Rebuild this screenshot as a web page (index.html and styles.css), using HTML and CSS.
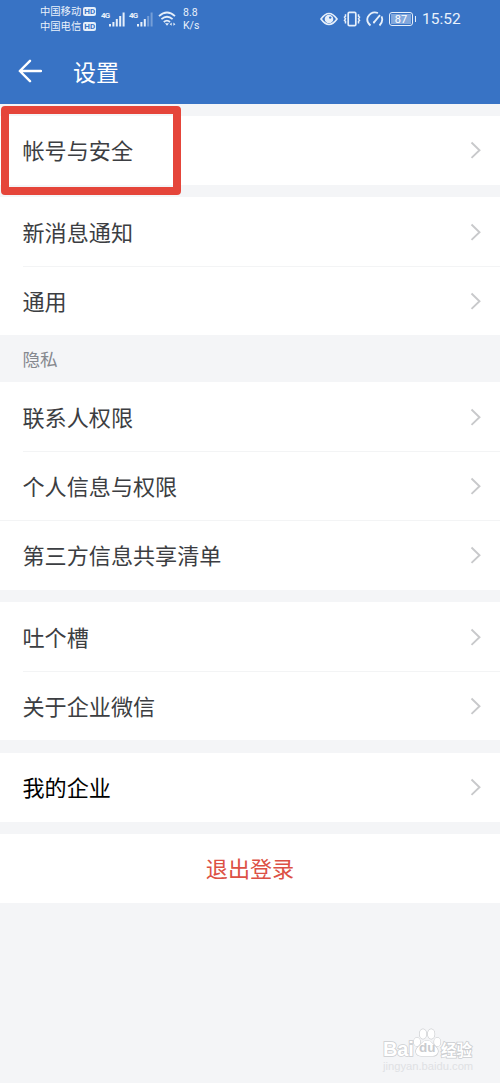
FILE: index.html
```html
<!DOCTYPE html>
<html lang="zh-CN">
<head>
<meta charset="utf-8">
<title>设置</title>
<link rel="stylesheet" href="styles.css">
</head>
<body>
<svg width="0" height="0" class="defs">
  <symbol id="chevron" viewBox="0 0 12 18"><path d="M1.500 1.500 9.500 9.200 1.500 16.900" fill="none" stroke="#c8c9cb" stroke-width="1.900"/></symbol>
</svg>
<header class="top">
  <div class="status">
    <div class="carriers">
      <div class="carrier">中国移动<span class="hd">HD</span></div>
      <div class="carrier">中国电信<span class="hd">HD</span></div>
    </div>
    <div class="signals">
      <div class="signal"><span class="gen">4G</span>
        <svg width="17" height="15" viewBox="0 0 17 15" fill="#e6effa"><rect x="0" y="12" width="2" height="2.5"/><rect x="3.4" y="10" width="2" height="4.5"/><rect x="6.8" y="7" width="2" height="7.5"/><rect x="10.2" y="4" width="2" height="10.5"/><rect x="13.6" y="0.5" width="2" height="14"/></svg>
      </div>
      <div class="signal"><span class="gen">4G</span>
        <svg width="17" height="15" viewBox="0 0 17 15" fill="#e6effa"><rect x="0" y="12" width="2" height="2.5"/><rect x="3.4" y="10" width="2" height="4.5"/><rect x="6.8" y="7" width="2" height="7.5"/><g opacity=".35"><rect x="10.2" y="4" width="2" height="10.5"/><rect x="13.6" y="0.5" width="2" height="14"/></g></svg>
      </div>
    </div>
    <svg class="wifi" width="18" height="16" viewBox="0 0 18 16" fill="none" stroke="#e6effa" stroke-width="1.8"><path d="M1 5.2Q9-2.2 17 5.2M3.4 8.2Q9 3.2 14.6 8.2M5.8 11Q9 8.2 12 11"/><path d="m7 12.2 2 2.6 2-2.6Z" fill="#e6effa" stroke="none"/><path d="m11.7 13.2 2-1.6v3.2Zm5.7 0-2-1.6v3.2Z" fill="#e6effa" stroke="none"/></svg>
    <div class="speed"><div>8.8</div><div>K/s</div></div>
    <div class="tray">
      <svg width="18" height="14" viewBox="0 0 18 14"><path d="M1 7Q9-4 17 7 9 18 1 7Z" fill="none" stroke="#e6effa" stroke-width="1.7"/><circle cx="9" cy="7" r="4.300" fill="#e6effa"/><circle cx="10.200" cy="5.600" r="1.2" fill="#3873c5"/></svg>
      <svg width="18" height="16" viewBox="0 0 18 16" fill="none" stroke="#e6effa"><rect x="5.2" y="1.3" width="7.6" height="13.4" rx="1.2" stroke-width="1.7"/><path d="M2.500 3.200v2l-1 1 1 1.600-1 1.600 1 1v2M15.500 3.200v2l1 1-1 1.600 1 1.600-1 1v2" stroke-width="1.5"/></svg>
      <svg width="18" height="16" viewBox="0 0 18 16" fill="none" stroke="#e6effa" stroke-width="1.8"><path d="M4.5 14.5Q-.3 10.5 2 5.7 5.5-.2 12 2M15.5 5.3q2.200 5-2 9.200M8 11.3l6-7.200"/><circle cx="8" cy="11.4" r="1.1" fill="#e6effa" stroke="none"/></svg>
      <div class="battery"><span class="level">87</span></div>
      <span class="clock">15:52</span>
    </div>
  </div>
  <div class="nav">
    <svg width="24" height="24" viewBox="0 0 24 24" fill="none" stroke="#fff" stroke-width="2.4" stroke-linecap="round" stroke-linejoin="round"><path d="M12 1.8 1.8 12 12 22.2M2 12h21"/></svg>
    <h1 class="title">设置</h1>
  </div>
</header>
<main class="list">
  <section class="group first">
    <div class="row"><span>帐号与安全</span><svg class="chev"><use href="#chevron"/></svg></div>
    <div class="highlight"></div>
  </section>
  <section class="group">
    <div class="row"><span>新消息通知</span><svg class="chev"><use href="#chevron"/></svg></div>
    <div class="row line"><span>通用</span><svg class="chev"><use href="#chevron"/></svg></div>
  </section>
  <h2 class="caption">隐私</h2>
  <section class="group joined">
    <div class="row"><span>联系人权限</span><svg class="chev"><use href="#chevron"/></svg></div>
    <div class="row line"><span>个人信息与权限</span><svg class="chev"><use href="#chevron"/></svg></div>
    <div class="row line full"><span>第三方信息共享清单</span><svg class="chev"><use href="#chevron"/></svg></div>
  </section>
  <section class="group">
    <div class="row"><span>吐个槽</span><svg class="chev"><use href="#chevron"/></svg></div>
    <div class="row line"><span>关于企业微信</span><svg class="chev"><use href="#chevron"/></svg></div>
  </section>
  <section class="group">
    <div class="row strong"><span>我的企业</span><svg class="chev"><use href="#chevron"/></svg></div>
  </section>
  <section class="group">
    <div class="row logout">退出登录</div>
  </section>
</main>
<div class="watermark">
  <div class="brand"><span class="bai">Bai</span><span class="paw"><svg width="28" height="29" viewBox="0 0 28 29" fill="#fff" stroke="#c9cbce" stroke-width="1.200"><ellipse cx="4" cy="14" rx="3.200" ry="4.200"/><ellipse cx="10" cy="6" rx="3.400" ry="4.800"/><ellipse cx="18.200" cy="6" rx="3.400" ry="4.800"/><ellipse cx="24.300" cy="14" rx="3.200" ry="4.200"/><path d="M14 12.500c4 0 5 3 8.500 6 5 5 1.500 9.500-3 9.500h-11c-5 0-8-4.500-3-9.500C9 15.500 10 12.500 14 12.500Z"/></svg><span class="du">du</span></span><span class="cn">经验</span></div>
  <div class="site">jingyan.baidu.com</div>
</div>
</body>
</html>
```
FILE: styles.css
```css
* { box-sizing: border-box; }
body {
  margin: 0;
  height: 1083px;
  position: relative;
  overflow: hidden;
  background: #f4f5f7;
  color: #3c3e42;
  font-family: Roboto, "Noto Sans CJK SC", sans-serif;
}
.defs { position: absolute; }
.top { height: 104px; background: #3873c5; color: #e9f1fb; }
.status { height: 38px; display: flex; align-items: center; padding-left: 40px; }
.carriers { width: 61px; }
.carrier { display: flex; align-items: center; height: 15.5px; font-size: 10.3px; line-height: 15.5px; white-space: nowrap; }
.hd { margin-left: 2px; width: 13px; height: 9px; border-radius: 2px; background: #e6effa; color: #3873c5; font-size: 8px; font-weight: 700; line-height: 9px; text-align: center; }
.signals { display: flex; gap: 3px; }
.signal { display: flex; align-items: flex-start; width: 25px; }
.gen { width: 8px; flex: none; font-size: 8px; font-weight: 700; line-height: 8px; letter-spacing: -.8px; }
.signal svg { flex: none; }
.wifi { margin-left: 4px; }
.speed { margin-left: 7px; width: 22px; font-size: 10.5px; line-height: 13px; }
.tray { margin-left: auto; padding-right: 38px; display: flex; align-items: center; gap: 5px; }
.battery { width: 24px; height: 14px; margin-right: 4px; padding: 1px; border: 1.5px solid #e6effa; border-radius: 3px; position: relative; }
.battery::after { content: ""; position: absolute; right: -4px; top: 3px; width: 1.5px; height: 6px; background: #e6effa; }
.level { display: block; height: 10px; background: #81a7dc; color: #fff; font-size: 11px; line-height: 11px; text-align: center; }
.clock { font-size: 15.5px; line-height: 20px; width: 40px; white-space: nowrap; }
.nav { height: 66px; display: flex; align-items: center; gap: 31px; padding-left: 18px; }
.title { margin: 5px 0 0; font-size: 23px; line-height: 30px; font-weight: 400; color: #fff; }
.group { margin-top: 12.5px; background: #fff; }
.first { margin-top: 12px; position: relative; }
.list { display: flow-root; }
.joined { margin-top: 0; }
.row { height: 68.7px; padding: 2px 18px 0 22.5px; display: flex; align-items: center; justify-content: space-between; font-size: 22.1px; line-height: 32px; position: relative; }
.line { height: 69.4px; }
.line::before { content: ""; position: absolute; left: 23px; right: 0; top: 0; height: 1px; background: #f3f4f5; }
.full::before { left: 0; }
.chev { width: 12px; height: 18px; margin-top: -2px; }
.strong { color: #000; }
.logout { justify-content: center; padding: 2px 0 0; color: #dc5145; }
.caption { margin: 0; height: 47px; padding: 1px 22.5px 0; font-size: 17.6px; font-weight: 400; line-height: 49px; color: #85888e; }
.highlight { position: absolute; left: 1px; top: -10px; width: 180px; height: 89px; border: 8px solid #e5453a; border-radius: 4px; }
.watermark { position: absolute; left: 383px; top: 1028px; width: 94px; color: #fff; }
.brand { display: flex; align-items: flex-end; height: 32px; font-family: "Liberation Sans", sans-serif; font-size: 20px; line-height: 22px; font-weight: 700; -webkit-text-stroke: 1.6px #cbcdd0; paint-order: stroke fill; }
.bai { width: 30px; letter-spacing: -.2px; }
.paw { width: 28px; height: 29px; margin-bottom: 3px; position: relative; }
.paw svg { display: block; }
.du { position: absolute; left: 6px; top: 12px; font-size: 13.5px; line-height: 16px; color: #c9cbce; -webkit-text-stroke: 0; }
.cn { font-family: "Noto Sans CJK SC", sans-serif; font-size: 15.5px; line-height: 21px; white-space: nowrap; }
.site { font-family: "Liberation Sans", sans-serif; font-size: 11.2px; line-height: 12px; color: #dfe1e4; }
```
